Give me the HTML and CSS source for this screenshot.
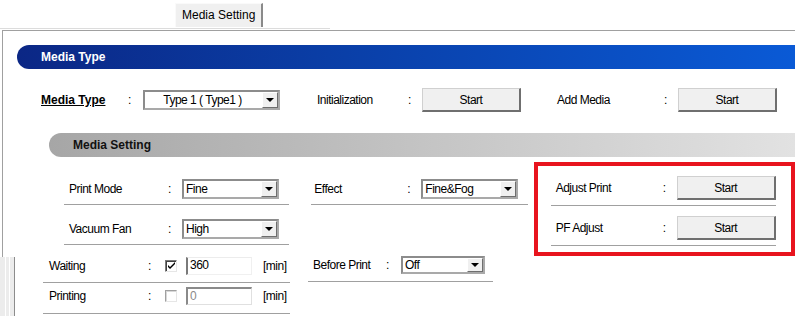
FILE: index.html
```
<!DOCTYPE html>
<html>
<head>
<meta charset="utf-8">
<link rel="stylesheet" href="styles.css">
</head>
<body>
<div class="tabstrip">
  <div class="tab">Media Setting</div>
</div>
<div class="panel">
  <div class="bar bar-blue">Media Type</div>
  <div class="row1">
    <span class="lbl w87 strong">Media Type</span>
    <span class="colon w15">:</span>
    <div class="select w137 centered"><span class="val">Type 1 ( Type1 )</span><span class="arrow"></span></div>
    <span class="lbl w91 ml37">Initialization</span>
    <span class="colon w14">:</span>
    <button class="btn">Start</button>
    <span class="lbl w107 ml36">Add Media</span>
    <span class="colon w14">:</span>
    <button class="btn">Start</button>
  </div>
  <div class="bar bar-gray">Media Setting</div>
  <div class="settings">
    <div class="col col-a">
      <div class="row">
        <span class="lbl w99">Print Mode</span>
        <span class="colon w14">:</span>
        <div class="select w97"><span class="val">Fine</span><span class="arrow"></span></div>
      </div>
      <div class="row">
        <span class="lbl w99">Vacuum Fan</span>
        <span class="colon w14">:</span>
        <div class="select w97"><span class="val">High</span><span class="arrow"></span></div>
      </div>
    </div>
    <div class="col col-b">
      <div class="row">
        <span class="lbl w93">Effect</span>
        <span class="colon w14">:</span>
        <div class="select w97"><span class="val">Fine&amp;Fog</span><span class="arrow"></span></div>
      </div>
    </div>
    <div class="col col-c">
      <div class="row rrow">
        <span class="lbl w107">Adjust Print</span>
        <span class="colon w14">:</span>
        <button class="btn">Start</button>
      </div>
      <div class="row rrow">
        <span class="lbl w107">PF Adjust</span>
        <span class="colon w14">:</span>
        <button class="btn">Start</button>
      </div>
    </div>
  </div>
</div>
<div class="lower">
  <div class="stripes"></div>
  <div class="lower-left">
    <div class="lrow lrow1">
      <span class="lbl w99">Waiting</span>
      <span class="colon w17">:</span>
      <span class="check"><svg width="9" height="9" viewBox="0 0 9 9"><path d="M1 4 L3 6 L8 1 L8 3 L3 8 L1 6 Z" fill="#000"/></svg></span>
      <span class="tbox">360</span>
      <span class="unit">[min]</span>
    </div>
    <div class="lrow lrow2">
      <span class="lbl w99">Printing</span>
      <span class="colon w17">:</span>
      <span class="check disabled"></span>
      <span class="tbox disabled">0</span>
      <span class="unit">[min]</span>
    </div>
  </div>
  <div class="lower-right">
    <div class="lrow lrow1">
      <span class="lbl w73">Before Print</span>
      <span class="colon w15">:</span>
      <div class="select w84 small"><span class="val">Off</span><span class="arrow"></span></div>
    </div>
  </div>
</div>
</body>
</html>
```
FILE: styles.css
```
* { box-sizing: border-box; }
html, body { margin: 0; padding: 0; background: #fff; }
body {
  width: 808px;
  height: 316px;
  overflow: hidden;
  font-family: "Liberation Sans", Arial, sans-serif;
  font-size: 12px;
  letter-spacing: -0.5px;
  color: #000;
}
.tabstrip {
  width: 330px;
  height: 29px;
  border-bottom: 1px solid #dcdcdc;
  padding-top: 3px;
}
.tab {
  margin-left: 175px;
  width: 88px;
  height: 24px;
  background: #f0f0f0;
  border-top: 1px solid #fafafa;
  border-left: 1px solid #fafafa;
  border-right: 2px solid #8a8a8a;
  font-size: 12px;
  letter-spacing: 0;
  padding: 3px 0 0 6px;
  line-height: 16px;
}
.panel {
  margin-left: 2px;
  margin-top: 1px;
  width: 793px;
  border-top: 1px solid #a0a0a0;
  border-left: 1px solid #a0a0a0;
  padding-top: 14px;
  padding-bottom: 1px;
}
.bar {
  height: 24px;
  line-height: 24px;
  font-size: 12px;
  font-weight: bold;
  letter-spacing: 0;
  border-radius: 12px 0 0 12px;
  padding-left: 24px;
}
.bar-blue {
  margin-left: 14px;
  color: #fff;
  background: linear-gradient(to right, #0b2785 0%, #0a3ea6 40%, #0a5ad6 100%);
}
.bar-gray {
  margin-left: 46px;
  margin-top: 21px;
  color: #111;
  background: linear-gradient(to right, #a6a6a6 0%, #c4c4c4 50%, #e2e2e2 100%);
}
.row1 {
  display: flex;
  align-items: center;
  height: 24px;
  margin-top: 19px;
  margin-left: 38px;
}
.lbl { display: inline-block; white-space: nowrap; }
.strong { font-weight: bold; font-size: 12px; letter-spacing: 0; text-decoration: underline; }
.colon { display: inline-block; }
.w14 { width: 14px; } .w15 { width: 15px; } .w17 { width: 17px; }
.w73 { width: 73px; } .w87 { width: 87px; } .w91 { width: 91px; } .w93 { width: 93px; }
.w99 { width: 99px; } .w107 { width: 107px; }
.ml36 { margin-left: 36px; } .ml37 { margin-left: 37px; }

.select {
  position: relative;
  display: flex;
  align-items: center;
  height: 20px;
  background: #fff;
  border: 2px solid #a9a9a9;
  border-top-color: #8c8c8c;
  border-left-color: #8c8c8c;
  padding-left: 1px;
}
.select .val { flex: 1; white-space: nowrap; padding-left: 1px; }
.select.centered .val { text-align: center; padding-right: 4px; }
.select .arrow {
  position: relative;
  width: 16px;
  height: 16px;
  background: #f0f0f0;
  border-top: 1px solid #fff;
  border-left: 1px solid #fff;
  border-right: 1px solid #6e6e6e;
  border-bottom: 1px solid #6e6e6e;
}
.select .arrow::after {
  content: "";
  position: absolute;
  left: 3px;
  top: 5px;
  border-left: 4px solid transparent;
  border-right: 4px solid transparent;
  border-top: 4px solid #000;
}
.w137 { width: 137px; } .w97 { width: 97px; } .w84 { width: 84px; }
.select.small { height: 18px; }
.select.small .arrow { height: 14px; }
.select.small .arrow::after { top: 4px; }

.btn {
  width: 99px;
  height: 24px;
  margin: 0;
  padding: 0;
  background: #f0f0f0;
  border: 1px solid #d0d0d0;
  border-right: 2px solid #6f6f6f;
  border-bottom: 2px solid #6f6f6f;
  font-family: "Liberation Sans", Arial, sans-serif;
  font-size: 12px;
  letter-spacing: -0.5px;
  color: #000;
}

.settings {
  display: flex;
  align-items: flex-start;
  margin-left: 61px;
  margin-top: 6px;
}
.col-a { width: 226px; padding-top: 2px; }
.col-b { width: 217px; margin-left: 22px; padding-top: 2px; }
.row {
  display: flex;
  align-items: center;
  height: 40px;
  padding-top: 9px;
  border-bottom: 1px solid #a0a0a0;
}
.col-a .row { padding-left: 5px; }
.col-b .row { padding-left: 3px; }
.col-c {
  width: 262px;
  margin-left: 6px;
  margin-top: -1px;
  border: 4px solid #e8141e;
  padding: 0 15px 6px 13px;
}
.rrow { padding-top: 5px; padding-left: 5px; }

.lower {
  display: flex;
  align-items: flex-start;
}
.stripes {
  width: 15px;
  height: 60px;
  background: linear-gradient(to right,
    #ececec 0, #ececec 5px, #fff 5px, #fff 6px,
    #ececec 6px, #ececec 9px, #fff 9px, #fff 10px,
    #ececec 10px, #ececec 14px, #8c8c8c 14px, #8c8c8c 15px);
}
.lower-left { width: 247px; margin-left: 28px; }
.lower-right { width: 185px; margin-left: 18px; }
.lrow {
  display: flex;
  align-items: center;
  border-bottom: 1px solid #a0a0a0;
}
.lower-left .lrow { padding-left: 6px; }
.lower-right .lrow { padding-left: 5px; }
.lrow1 { height: 26px; padding-bottom: 8px; }
.lrow2 { height: 31px; padding-top: 4px; padding-bottom: 9px; }
.lower-right .lrow1 { height: 25px; }
.check {
  display: inline-flex;
  align-items: center;
  justify-content: center;
  width: 12px;
  height: 12px;
  margin-right: 9px;
  background: #fff;
  border-top: 1px solid #7a7a7a;
  border-left: 1px solid #7a7a7a;
  border-right: 1px solid #e6e6e6;
  border-bottom: 1px solid #e6e6e6;
  box-shadow: inset 1px 1px 0 #404040;
}
.check.disabled {
  border-top-color: #a0a0a0;
  border-left-color: #a0a0a0;
  box-shadow: inset 1px 1px 0 #d8d8d8;
}
.tbox {
  width: 66px;
  height: 18px;
  line-height: 15px;
  padding-left: 2px;
  background: #fff;
  border-top: 1px solid #ececec;
  border-left: 2px solid #7a7a7a;
  border-right: 1px solid #f0f0f0;
  border-bottom: 1px solid #f0f0f0;
}
.tbox.disabled {
  color: #8a8a8a;
  border: 1px solid #a8a8a8;
  border-top: 2px solid #8a8a8a;
  border-left: 2px solid #8a8a8a;
  border-right-color: #e0e0e0;
  border-bottom-color: #e0e0e0;
}
.unit { margin-left: 11px; }
```
